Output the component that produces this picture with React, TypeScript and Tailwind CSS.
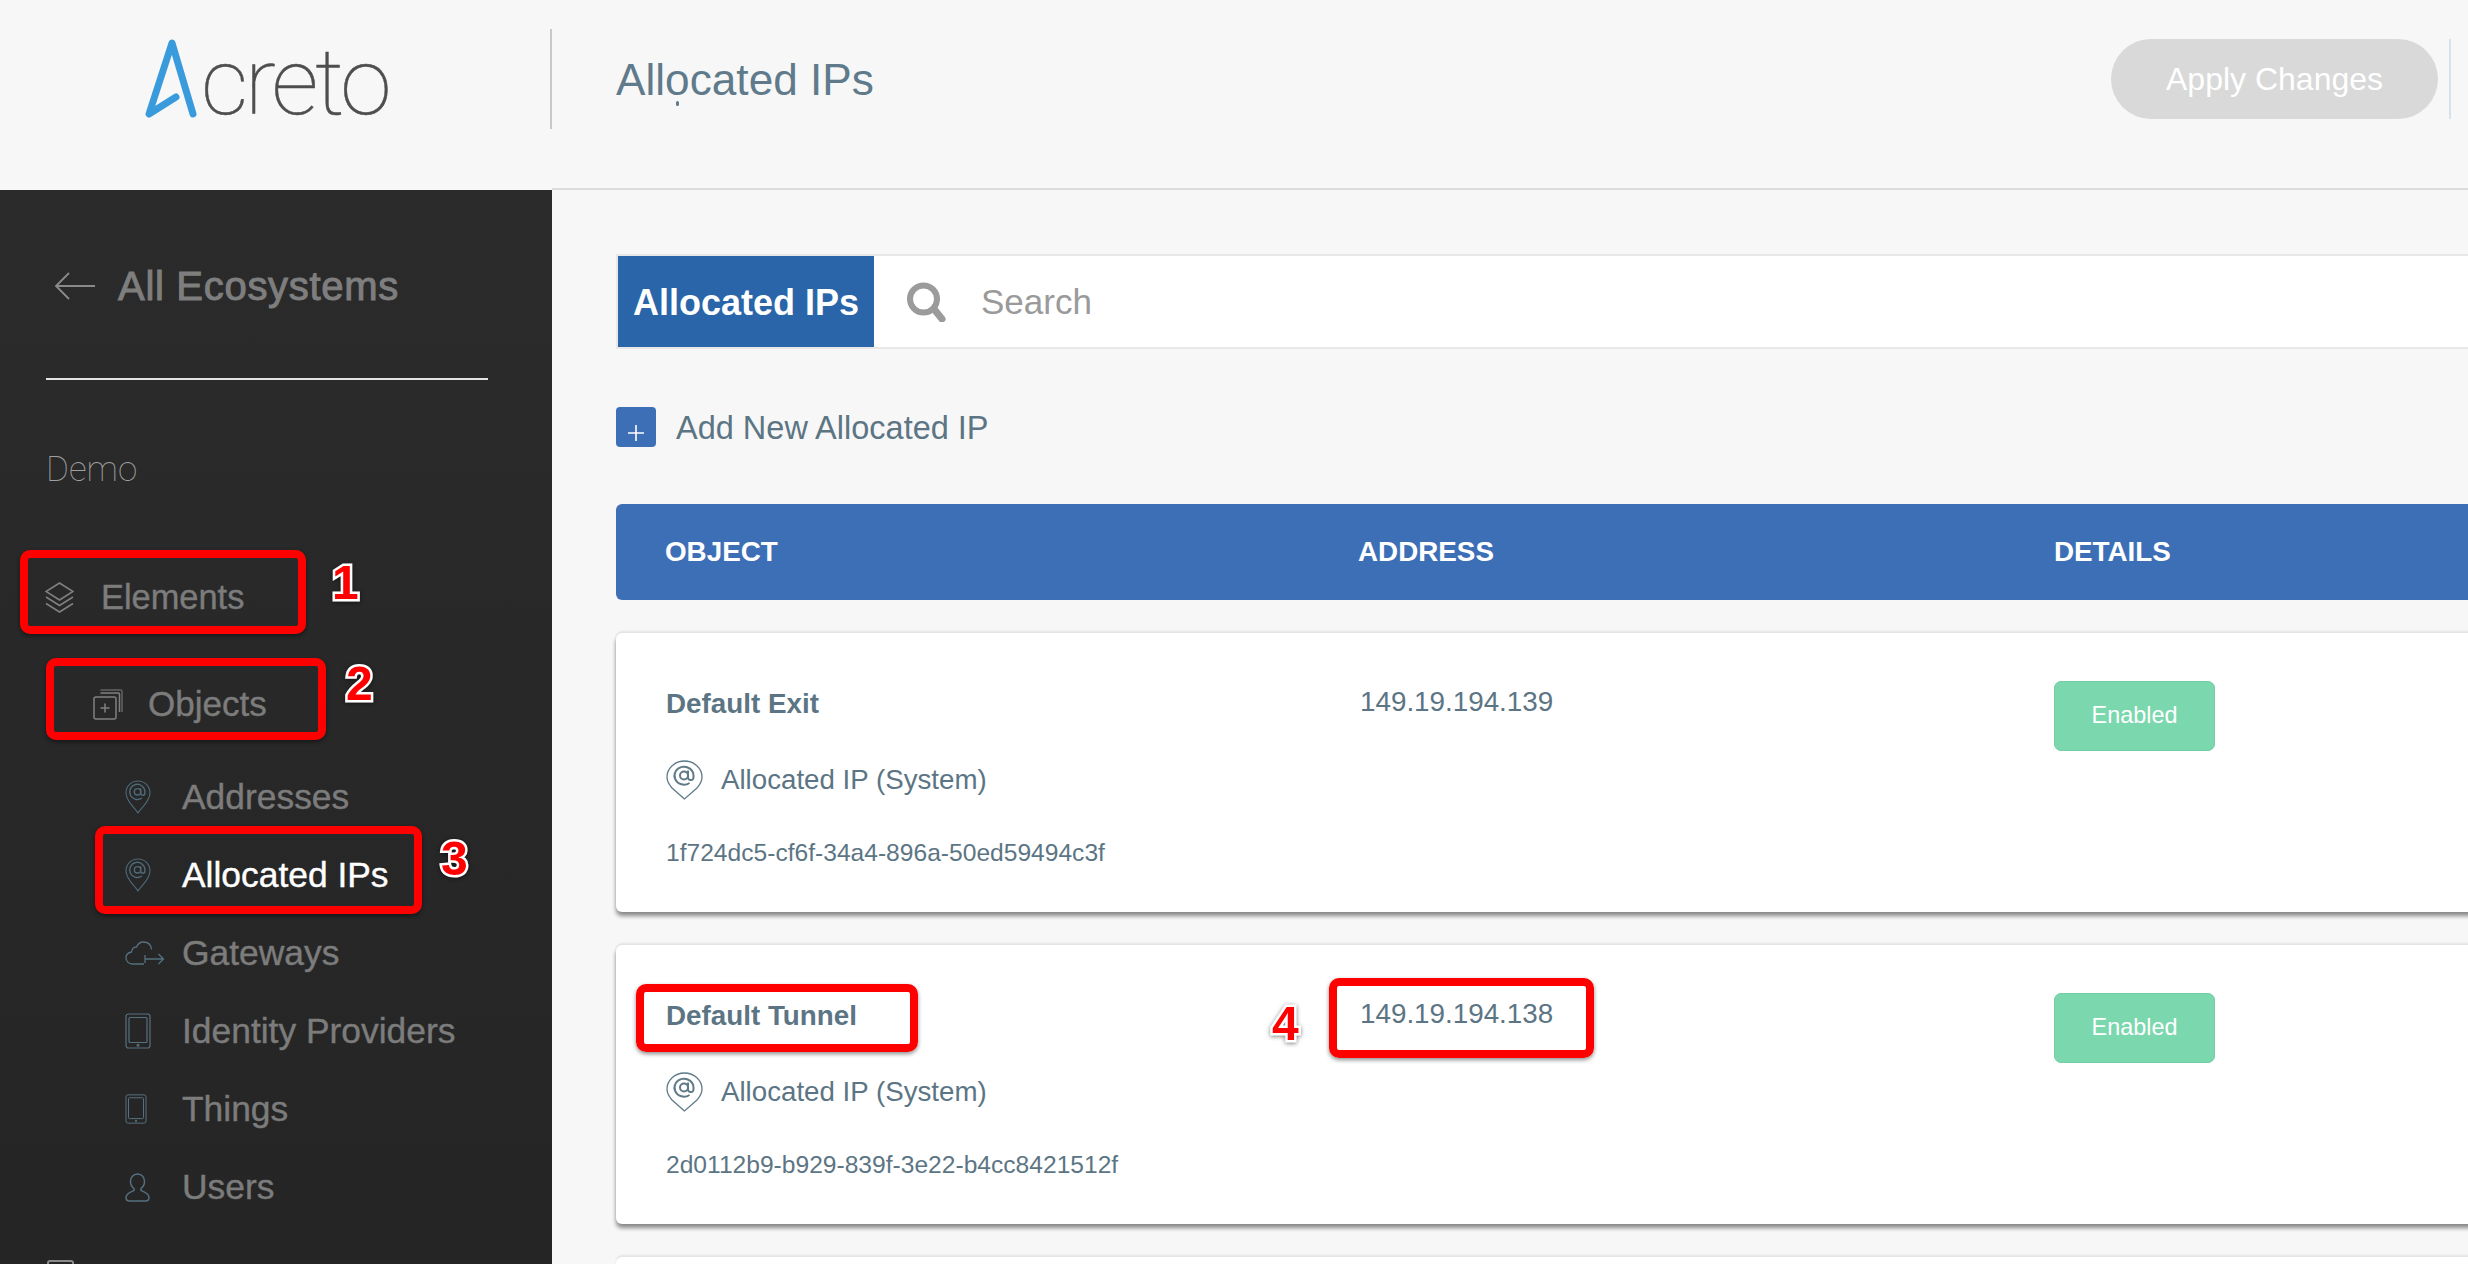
import { FC, ReactNode } from "react";

// sidebar + card icons, drawn to match the product's thin outline set
const PinIcon = () => (
  <svg viewBox="0 0 26 34" fill="none" stroke="#4f6a78" strokeWidth="1.1" className="w-[26px] h-[34px]">
    <path d="M13 33C9.5 27.5 1 21.5 1 12.8A12 11.8 0 0 1 25 12.8C25 21.5 16.5 27.5 13 33Z" />
    <circle cx="12.5" cy="11.8" r="3.2" strokeWidth="1.4" />
    <path d="M15.7 8.2V13.2A2.1 2.1 0 0 0 19.9 13V11.8A7.6 7.6 0 1 0 16.9 18" strokeWidth="1.4" />
  </svg>
);

// the pin next to a row's type is rounder than the sidebar one
const CardPinIcon = () => (
  <svg viewBox="0 0 37 40" fill="none" stroke="#5f7a88" strokeWidth="1.3" className="w-[37px] h-[40px] shrink-0">
    <path d="M18.5 39L6 28C3 24.5 1 21 1 17A17.5 16 0 0 1 36 17C36 21 34 24.5 31 28Z" />
    <circle cx="18" cy="15.5" r="4" strokeWidth="2" />
    <path d="M22 10.5V17.5A2.7 2.7 0 0 0 27.5 17V15.5A9.5 9 0 1 0 23.5 23" strokeWidth="2" />
  </svg>
);

const LayersIcon = () => (
  <svg viewBox="0 0 29 31" fill="none" stroke="#808080" strokeWidth="1.5" className="w-[29px] h-[31px]">
    <path d="M14.5 1L28 9.5L14.5 18L1 9.5Z" />
    <path d="M1 15L14.5 23.5L28 15" />
    <path d="M1 21.5L14.5 30L28 21.5" />
  </svg>
);

const ObjectsIcon = () => (
  <svg viewBox="0 0 30 31" fill="none" stroke="#808080" strokeWidth="1.5" className="w-[30px] h-[31px]">
    <rect x="1" y="8" width="22" height="22" rx="2" />
    <path d="M7.5 4H25.5C26.5 4 26.5 4 26.5 5V23" />
    <path d="M7.5 1H28C29 1 29 1.5 29 2V23" strokeWidth="1" />
    <path d="M12 14.5V23.5M7.5 19H16.5" />
  </svg>
);

const CloudIcon = () => (
  <svg viewBox="0 0 40 24" fill="none" stroke="#56707f" strokeWidth="1.3" className="w-[40px] h-[24px]">
    <path d="M19 23H7.5C3.5 23 1 20 1 17C1 13.5 3.5 11.5 6.5 11C7 7.5 9 6 11.5 6C13 2.5 15.5 1 18.5 1C23 1 26 4 26.5 8.5" />
    <path d="M20 14V22M20 18H38.5M33.5 13L38.5 18L33.5 23" />
  </svg>
);

const PhoneIcon: FC<{ className: string }> = ({ className }) => (
  <svg viewBox="0 0 26 36" fill="none" stroke="#56707f" strokeWidth="1.2" className={className}>
    <rect x="1" y="1" width="24" height="34" rx="2.5" />
    <rect x="4" y="4.5" width="18" height="25" rx="1" />
    <circle cx="13" cy="32.3" r="0.9" fill="#56707f" />
  </svg>
);

const UserIcon = () => (
  <svg viewBox="0 0 25 29" fill="none" stroke="#56707f" strokeWidth="1.5" className="w-[25px] h-[29px]">
    <path d="M12.5 1C8 1 5.5 4.5 5.5 8.5C5.5 11.5 7 14 9 15.5V17.5C6 18.7 1 20.5 1 24.5C1 26.8 2.5 28 4.5 28H20.5C22.5 28 24 26.8 24 24.5C24 20.5 19 18.7 16 17.5V15.5C18 14 19.5 11.5 19.5 8.5C19.5 4.5 17 1 12.5 1Z" />
  </svg>
);

const SubItem: FC<{ icon: ReactNode; label: string; active?: boolean }> = ({ icon, label, active }) => (
  <div className="flex items-center h-[78px] pl-[125px]">
    <div className="w-[57px] shrink-0 flex items-center">{icon}</div>
    <span className={`pt-[2px] text-[35.4px] [-webkit-text-stroke:0.4px] whitespace-nowrap ${active ? "text-white" : "text-[#7c7c7c]"}`}>
      {label}
    </span>
  </div>
);

const Sidebar = () => (
  <aside className="w-[552px] shrink-0 bg-gradient-to-b from-[#2b2b2b] to-[#252525]">
    <div className="flex items-center h-[40px] mt-[76px] ml-[54px]">
      <svg viewBox="0 0 41 28" fill="none" stroke="#8a8a8a" strokeWidth="1.8" className="w-[41px] h-[28px]">
        <path d="M41 14H2M15 1L2 14L15 27" />
      </svg>
      <span className="ml-[23px] text-[40px] tracking-[0.7px] [-webkit-text-stroke:1px] text-[#7e7e7e] whitespace-nowrap">
        All Ecosystems
      </span>
    </div>
    <div className="h-[2px] w-[442px] ml-[46px] mt-[72px] bg-[#e2e2e2]" />
    <div className="ml-[46px] mt-[70px] h-[40px] flex items-center text-[35px] font-['Roboto',sans-serif] font-thin text-[#a0a0a0]">
      Demo
    </div>
    <div className="flex items-center h-[78px] mt-[68px] pl-[45px]">
      <div className="w-[56px] shrink-0 flex items-center"><LayersIcon /></div>
      <span className="pt-[2px] text-[34.4px] [-webkit-text-stroke:0.4px] text-[#7c7c7c]">Elements</span>
    </div>
    <div className="flex items-center h-[78px] mt-[29px] pl-[93px]">
      <div className="w-[55px] shrink-0 flex items-center"><ObjectsIcon /></div>
      <span className="pt-[1px] text-[35px] [-webkit-text-stroke:0.4px] text-[#7c7c7c]">Objects</span>
    </div>
    <div className="mt-[15px]">
      <SubItem icon={<PinIcon />} label="Addresses" />
      <SubItem icon={<PinIcon />} label="Allocated IPs" active />
      <SubItem icon={<CloudIcon />} label="Gateways" />
      <SubItem icon={<PhoneIcon className="w-[26px] h-[36px]" />} label="Identity Providers" />
      <SubItem icon={<PhoneIcon className="w-[22px] h-[30px]" />} label="Things" />
      <SubItem icon={<UserIcon />} label="Users" />
    </div>
    <div className="mt-[34px] ml-[47px] w-[27px] h-[8px] rounded-[3px] border-2 border-[#8a8a8a]" />
  </aside>
);

const rows = [
  { name: "Default Exit", address: "149.19.194.139", id: "1f724dc5-cf6f-34a4-896a-50ed59494c3f" },
  { name: "Default Tunnel", address: "149.19.194.138", id: "2d0112b9-b929-839f-3e22-b4cc8421512f" },
];

const Row: FC<{ name: string; address: string; id: string }> = ({ name, address, id }) => (
  <div className="grid grid-cols-[694px_694px_1fr] h-[279px] pl-[50px] pt-[48px] rounded-l-[6px] bg-white text-[#5c7584] shadow-[0_4px_4px_rgba(0,0,0,0.45),0_-2px_2px_rgba(0,0,0,0.08)]">
    <div>
      <div className="mt-[3px] h-[40px] leading-[40px] text-[27.8px] font-bold">{name}</div>
      <div className="mt-[36px] h-[40px] flex items-center">
        <CardPinIcon />
        <span className="ml-[18px] text-[27.7px]">Allocated IP (System)</span>
      </div>
      <div className="mt-[38px] h-[30px] leading-[30px] text-[24.6px]">{id}</div>
    </div>
    <div className="mt-[1px] h-[40px] leading-[40px] text-[27.8px]">{address}</div>
    <div>
      <div className="w-[161px] h-[70px] flex items-center justify-center rounded-[7px] bg-[#7bd8ae] border border-[#72cca4] text-white text-[23.4px]">
        Enabled
      </div>
    </div>
  </div>
);

const Main = () => (
  <main className="flex-1 min-w-0 overflow-hidden pl-[64px] pt-[64px] bg-[#f7f7f7]">
    <div className="flex items-stretch h-[95px] -mr-[12px] border-2 border-[#e8e8e8] bg-white">
      <div className="w-[256px] flex items-center justify-center pt-[2px] bg-[#2965a8] text-white text-[36px] font-bold whitespace-nowrap">
        Allocated IPs
      </div>
      <svg viewBox="0 0 40 40" fill="none" stroke="#9b9b9b" className="w-[40px] h-[40px] self-center ml-[32px]">
        <circle cx="17.5" cy="17" r="13.5" strokeWidth="6" />
        <path d="M28 27L36 37" strokeWidth="7" strokeLinecap="round" />
      </svg>
      <span className="self-center ml-[35px] pt-[1px] text-[35px] text-[#9a9a9a]">Search</span>
    </div>

    <div className="flex items-center h-[40px] mt-[58px]">
      <div className="w-[40px] h-[40px] flex items-center justify-center rounded-[4px] bg-[#3d6fb7]">
        <svg viewBox="0 0 16 16" stroke="white" strokeWidth="1.6" className="w-[16px] h-[16px] mt-[11px]">
          <path d="M8 0V16M0 8H16" />
        </svg>
      </div>
      <span className="ml-[20px] pt-[2px] text-[32.5px] text-[#5c7584] whitespace-nowrap">Add New Allocated IP</span>
    </div>

    <div className="grid grid-cols-[693px_696px_1fr] items-center h-[96px] mt-[57px] -mr-[12px] pl-[49px] rounded-l-[6px] bg-[#3d6fb7] text-white text-[27.8px] font-bold">
      <span>OBJECT</span>
      <span>ADDRESS</span>
      <span>DETAILS</span>
    </div>

    <div className="flex flex-col gap-[33px] mt-[33px] -mr-[12px]">
      {rows.map((row) => (
        <Row key={row.id} {...row} />
      ))}
      <div className="h-[279px] rounded-l-[6px] bg-white shadow-[0_-2px_2px_rgba(0,0,0,0.08)]" />
    </div>
  </main>
);

const boxClass = "absolute rounded-[10px] border-[8px] border-[#fe0000] shadow-[0_2px_4px_rgba(0,0,0,0.45)]";
const numClass =
  "absolute text-[48px] leading-none font-bold text-[#fe0000] [-webkit-text-stroke:5px_white] [paint-order:stroke_fill] drop-shadow-[0_1px_2px_rgba(0,0,0,0.5)]";

export default function App() {
  return (
    <div className="relative w-[2468px] h-[1264px] overflow-hidden flex flex-col bg-[#f7f7f7] font-['Liberation_Sans',Arial,sans-serif]">
      <header className="flex h-[190px] shrink-0">
        <div className="w-[552px] shrink-0 flex">
          <div className="flex w-[550px] pl-[145px] pt-[39px]">
            <svg viewBox="0 0 52 80" fill="none" stroke="#3a9bdc" strokeWidth="7" strokeLinecap="round" strokeLinejoin="round" className="w-[52px] h-[80px] shrink-0">
              <path d="M31 58L4 75L27 4L48 75" />
            </svg>
            <span className="ml-[4px] h-[80px] leading-[88px] text-[93px] tracking-[-3.4px] font-['Roboto',sans-serif] font-thin text-[#4e4e50] [-webkit-text-stroke:0.5px]">
              creto
            </span>
          </div>
          <div className="w-[2px] h-[100px] mt-[29px] bg-[#c8c8c8]" />
        </div>
        <div className="flex-1 flex items-start border-b-2 border-[#dcdcdc]">
          <h1 className="relative ml-[64px] mt-[55px] h-[50px] leading-[50px] text-[44.2px] text-[#5f7b8b] whitespace-nowrap">
            Allocated IPs
            <span className="absolute left-[60px] top-[46px] w-[3px] h-[5px] rounded-full bg-[#5f7b8b]" />
          </h1>
          <div className="ml-auto mt-[39px] w-[327px] h-[80px] flex items-center justify-center rounded-full bg-[#d9d9d9] text-white text-[32px]">
            Apply Changes
          </div>
          <div className="ml-[11px] mr-[17px] mt-[39px] w-[2px] h-[80px] bg-[#d8e2ea]" />
        </div>
      </header>

      <div className="flex flex-1 min-h-0">
        <Sidebar />
        <Main />
      </div>

      {/* annotations laid over the screenshot */}
      <div className={`${boxClass} left-[20px] top-[550px] w-[286px] h-[84px]`} />
      <div className={`${boxClass} left-[46px] top-[658px] w-[280px] h-[82px]`} />
      <div className={`${boxClass} left-[95px] top-[826px] w-[327px] h-[88px]`} />
      <div className={`${boxClass} left-[636px] top-[984px] w-[282px] h-[68px]`} />
      <div className={`${boxClass} left-[1329px] top-[978px] w-[265px] h-[80px]`} />
      <span className={`${numClass} left-[332px] top-[559px]`}>1</span>
      <span className={`${numClass} left-[346px] top-[660px]`}>2</span>
      <span className={`${numClass} left-[441px] top-[835px]`}>3</span>
      <span className={`${numClass} left-[1272px] top-[1000px]`}>4</span>
    </div>
  );
}
